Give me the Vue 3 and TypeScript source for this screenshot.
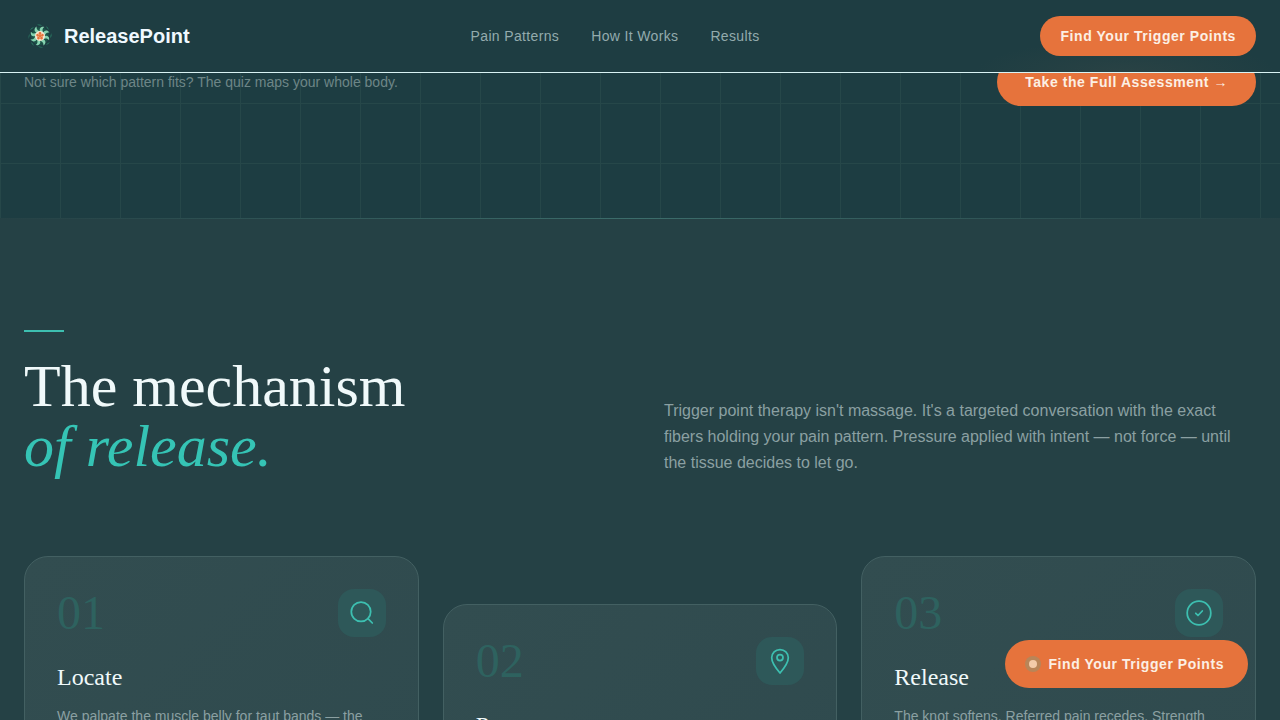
<script setup lang="ts">
interface Step {
  number: string
  title: string
  text: string
  icon: 'search' | 'pin' | 'check'
}

const links: string[] = ['Pain Patterns', 'How It Works', 'Results']

const steps: Step[] = [
  { number: '01', title: 'Locate', text: 'We palpate the muscle belly for taut bands — the', icon: 'search' },
  { number: '02', title: 'Press', text: '', icon: 'pin' },
  { number: '03', title: 'Release', text: 'The knot softens. Referred pain recedes. Strength', icon: 'check' },
]

const petals: number[] = [20, 65, 110, 155, 200, 245, 290, 335]
const core: number[] = [0, 72, 144, 216, 288]
</script>

<template>
  <div class="page">
    <header class="header">
      <a class="brand" href="#">
        <svg class="logo" viewBox="0 0 32 32" aria-hidden="true">
          <circle cx="16" cy="16" r="9" fill="#1c5347" />
          <g v-for="angle in petals" :key="angle" :transform="`rotate(${angle} 16 16)`">
            <path d="M15 12.500C12.500 10 13 6.500 17 6C15.500 8 16 9.500 17.500 11.500Z" fill="#86d3b0" />
            <path d="M18 4.500Q21 5 22.500 7.500Q20 6.500 18 4.500Z" fill="#2b8468" />
          </g>
          <circle cx="16" cy="16" r="5" fill="#f7e6d0" />
          <g v-for="angle in core" :key="angle" :transform="`rotate(${angle} 16 16)`">
            <circle cx="16" cy="13.500" r="1.400" fill="#e8743b" />
          </g>
          <circle cx="16" cy="16" r="1.200" fill="#e8743b" />
        </svg>
        <span>ReleasePoint</span>
      </a>
      <nav class="nav">
        <a v-for="link in links" :key="link" href="#">{{ link }}</a>
      </nav>
      <button class="button button-small" type="button">Find Your Trigger Points</button>
    </header>

    <section class="assessment">
      <p>Not sure which pattern fits? The quiz maps your whole body.</p>
      <button class="button button-large" type="button">Take the Full Assessment →</button>
    </section>

    <section class="mechanism">
      <div class="intro">
        <div>
          <div class="rule"></div>
          <h2>The mechanism<br /><em>of release.</em></h2>
        </div>
        <p>
          Trigger point therapy isn't massage. It's a targeted conversation with the exact
          fibers holding your pain pattern. Pressure applied with intent — not force — until
          the tissue decides to let go.
        </p>
      </div>

      <div class="cards">
        <article v-for="step in steps" :key="step.number" class="card">
          <div class="card-top">
            <span class="number">{{ step.number }}</span>
            <span class="icon">
              <svg v-if="step.icon === 'search'" viewBox="0 0 28 28" aria-hidden="true">
                <circle cx="13" cy="12.700" r="9.700" />
                <path d="M20 19.700L24.300 24" />
              </svg>
              <svg v-else-if="step.icon === 'pin'" viewBox="0 0 28 28" aria-hidden="true">
                <path d="M14 26C14 26 22.300 16.500 22.300 10.800A8.300 8.300 0 0 0 5.700 10.800C5.700 16.500 14 26 14 26Z" />
                <circle cx="14" cy="10.500" r="3" />
              </svg>
              <svg v-else viewBox="0 0 28 28" aria-hidden="true">
                <circle cx="14" cy="14" r="11.800" />
                <path d="M10.800 14.300L13 16.500L17.300 12" />
              </svg>
            </span>
          </div>
          <h3>{{ step.title }}</h3>
          <p>{{ step.text }}</p>
        </article>
      </div>
    </section>

    <button class="button floating" type="button">
      <span class="dot"></span>
      Find Your Trigger Points
    </button>
  </div>
</template>

<style>
body {
  margin: 0;
  background: #254145;
}
</style>

<style scoped>
.page {
  height: 100vh;
  overflow: hidden;
  color: #f0f9fa;
  background: #254145;
  font-family: "Liberation Sans", Arial, sans-serif;
}

.header {
  position: fixed;
  inset: 0 0 auto;
  z-index: 2;
  display: flex;
  align-items: center;
  justify-content: space-between;
  height: 72px;
  padding: 0 24px;
  border-bottom: 1px solid #d9f3f4;
  background:
    radial-gradient(ellipse 150px 32px at calc(100% - 154px) 100%, #294244, transparent),
    #1e3d42;
}

.brand {
  display: flex;
  align-items: center;
  gap: 8px;
  color: #f0f9ff;
  font-size: 20px;
  font-weight: 700;
  text-decoration: none;
}

.logo {
  width: 32px;
  height: 32px;
}

.nav {
  display: flex;
  gap: 32px;
}

.nav a {
  color: #93abad;
  font-size: 14px;
  letter-spacing: 0.025em;
  text-decoration: none;
}

.button {
  border: 0;
  border-radius: 24px;
  color: #fcefe4;
  background: #e6733c;
  font-family: inherit;
  font-size: 14px;
  font-weight: 700;
  letter-spacing: 0.04em;
  white-space: nowrap;
  cursor: pointer;
}

.button-small {
  height: 40px;
  padding: 0 20px;
}

.button-large {
  height: 48px;
  padding: 0 28px;
}

.assessment {
  display: flex;
  align-items: center;
  justify-content: space-between;
  padding: 58px 24px 112px;
  background:
    linear-gradient(#264749 1px, transparent 1px) 0 43px / 60px 60px,
    linear-gradient(90deg, #264749 1px, transparent 1px) 0 0 / 60px 60px,
    #1d3d42;
}

.assessment p {
  margin: 0;
  color: #6d8687;
  font-size: 14px;
}

.mechanism {
  padding: 0 24px 112px;
}

.mechanism::before {
  display: block;
  height: 1px;
  margin: 0 -24px 111px;
  background: linear-gradient(90deg, #254145, #3c6d6b 50%, #254145);
  content: "";
}

.intro {
  display: grid;
  grid-template-columns: 1fr 1fr;
  align-items: end;
  gap: 48px;
}

.rule {
  width: 40px;
  height: 2px;
  margin-bottom: 24px;
  background: #3dbfb0;
}

h2,
h3 {
  margin: 0;
  font-family: "Liberation Serif", "Times New Roman", serif;
  font-weight: 400;
}

h2 {
  font-size: 60px;
  line-height: 60px;
}

h2 em {
  color: #35c4b5;
}

.intro p {
  margin: 0;
  color: #8ba0a2;
  font-size: 16px;
  line-height: 26px;
}

.cards {
  display: grid;
  grid-template-columns: repeat(3, 1fr);
  gap: 24px;
  margin-top: 80px;
}

.card {
  min-height: 200px;
  padding: 32px;
  border: 1px solid #436062;
  border-radius: 24px;
  background: linear-gradient(135deg, #324d50, #2f4a4e);
}

.card:nth-child(2) {
  margin-top: 48px;
}

.card-top {
  display: flex;
  justify-content: space-between;
  margin-bottom: 24px;
}

.number {
  color: #2e625f;
  font-family: "Liberation Serif", "Times New Roman", serif;
  font-size: 48px;
  line-height: 48px;
}

.icon {
  display: grid;
  place-items: center;
  width: 48px;
  height: 48px;
  border-radius: 16px;
  background: #2e5859;
}

.icon svg {
  width: 28px;
  height: 28px;
  fill: none;
  stroke: #3dbfb0;
  stroke-width: 1.75;
  stroke-linecap: round;
  stroke-linejoin: round;
}

h3 {
  margin-bottom: 12px;
  font-size: 24px;
  line-height: 32px;
}

.card p {
  margin: 0;
  color: #8ba0a2;
  font-size: 14px;
  line-height: 23px;
}

.floating {
  position: fixed;
  right: 32px;
  bottom: 32px;
  z-index: 3;
  display: flex;
  align-items: center;
  gap: 12px;
  height: 48px;
  padding: 0 24px;
}

.dot {
  width: 8px;
  height: 8px;
  border-radius: 50%;
  background: #f3cba9;
  box-shadow: 0 0 0 4px #b98558;
}
</style>
